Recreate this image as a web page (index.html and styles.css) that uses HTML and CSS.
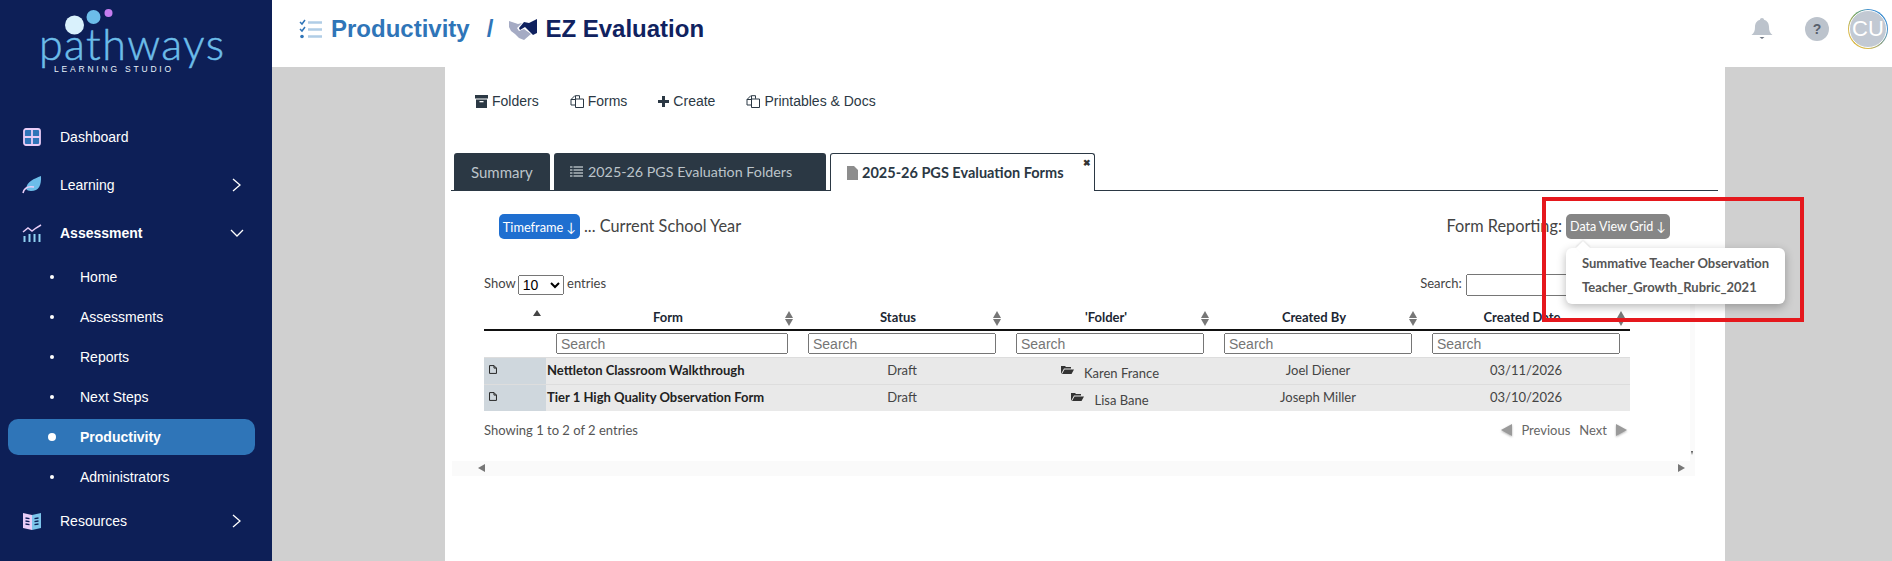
FILE: index.html
```html
<!DOCTYPE html>
<html lang="en">
<head>
<meta charset="utf-8">
<title>EZ Evaluation</title>
<link rel="stylesheet" href="styles.css">
</head>
<body>
<div class="app">
  <aside class="sidebar">
    <div class="logo">
      <svg class="logo-dots" width="60" height="32" viewBox="0 0 60 32"><circle cx="11.5" cy="19" r="9.5" fill="#d9f1fc"/><circle cx="30.5" cy="11" r="7" fill="#6cbde9"/><circle cx="45.5" cy="7" r="4" fill="#c67df0"/></svg>
      <div class="logo-word">pathways</div>
      <div class="logo-sub">LEARNING STUDIO</div>
    </div>
    <nav class="nav">
      <a class="nav-main">
        <svg class="nav-icon" viewBox="0 0 20 20"><rect x="2" y="2" width="16" height="16" rx="2" fill="#2f75b8" stroke="#e9cdf7" stroke-width="1.8"/><path d="M10 2v16M2 10h16" stroke="#e9cdf7" stroke-width="1.8"/></svg>
        <span>Dashboard</span>
      </a>
      <a class="nav-main">
        <svg class="nav-icon" viewBox="0 0 20 20"><path d="M19 1c.5 9-2 15-10 15-2.500 0-4-1-5-2C5 6 12 4 19 1z" fill="#6cbde9"/><path d="M1 18c1-5 5-7 11-6" fill="none" stroke="#e9cdf7" stroke-width="1.500"/></svg>
        <span>Learning</span>
        <svg class="chev" viewBox="0 0 12 14"><path d="M2 1l7 6-7 6" fill="none" stroke="#fff" stroke-width="1.300"/></svg>
      </a>
      <a class="nav-main nav-open">
        <svg class="nav-icon" viewBox="0 0 20 20"><path d="M1 9l5-4 4 3 4-3 5-3" fill="none" stroke="#e9cdf7" stroke-width="1.500"/><path d="M2.500 13v6M7.500 11v8M12.500 11v8M17.500 11v8" stroke="#8fd0f0" stroke-width="2"/></svg>
        <span>Assessment</span>
        <svg class="chev chev-down" viewBox="0 0 14 12"><path d="M1 3l6 6 6-6" fill="none" stroke="#fff" stroke-width="1.300"/></svg>
      </a>
      <a class="nav-sub">Home</a>
      <a class="nav-sub">Assessments</a>
      <a class="nav-sub">Reports</a>
      <a class="nav-sub">Next Steps</a>
      <a class="nav-sub nav-active">Productivity</a>
      <a class="nav-sub">Administrators</a>
      <a class="nav-main">
        <svg class="nav-icon" viewBox="0 0 20 20"><path d="M10 4L1 2v15l9 2z" fill="#e9cdf7"/><path d="M10 4l9-2v15l-9 2z" fill="#7cc4ea"/><path d="M3.500 7l4 .6M3.500 10l4 .6M3.500 13l4 .6M12.500 7.600l4-.6M12.500 10.600l4-.6M12.500 13.600l4-.6" stroke="#0d1f57" stroke-width="1.300"/></svg>
        <span>Resources</span>
        <svg class="chev" viewBox="0 0 12 14"><path d="M2 1l7 6-7 6" fill="none" stroke="#fff" stroke-width="1.300"/></svg>
      </a>
    </nav>
  </aside>
  <div class="main">
    <header class="topbar">
      <svg class="crumb-icon" width="24" height="20" viewBox="0 0 24 20"><path d="M1 3l2 2 3-4M1 10l2 2 3-4" fill="none" stroke="#2f75b8" stroke-width="1.500"/><circle cx="3" cy="17.500" r="1.800" fill="#2f75b8"/><path d="M9 3.500h14M9 10.500h14M9 17.500h14" stroke="#b0cde6" stroke-width="2.600"/></svg>
      <span class="crumb-link">Productivity</span>
      <span class="crumb-sep">/</span>
      <svg class="crumb-hands" width="28" height="21" viewBox="0 0 28 21"><path d="M0 2L9 5l4-1-5 5 2 3 5-2 7 5-7 6-5-2-4-4-4-3-2-4z" fill="#a5abc4"/><path d="M10 9l5-6 5 1 8-4v14l-4 2-8-8-5 3z" fill="#10225f"/></svg>
      <h1 class="crumb-title">EZ Evaluation</h1>
      <div class="top-actions">
        <svg class="bell" width="22" height="24" viewBox="0 0 22 24"><path d="M11 1c1.200 0 2 .8 2 1.800C16.500 3.700 18 7 18 10c0 4 1 6 3.500 8H.5C3 16 4 14 4 10c0-3 1.500-6.300 5-7.200C9 1.800 9.800 1 11 1z" fill="#bcc3cc"/><path d="M8.500 20h5l-2.500 2z" fill="#6e7682"/></svg>
        <span class="help">?</span>
        <span class="avatar"><span class="avatar-in">CU</span></span>
      </div>
    </header>
    <main class="stage">
      <section class="panel">
        <div class="toolbar">
          <a class="tool"><svg width="13" height="13" viewBox="0 0 13 13"><path d="M0 0h13v3.500H0zM1 4.500h11V13H1z" fill="#2b3844"/><rect x="4.500" y="6" width="4" height="1.300" fill="#fff"/></svg>Folders</a>
          <a class="tool"><svg width="14" height="13" viewBox="0 0 14 13"><path d="M5.500 4V.7h4v3M1 4.500l4-4M5.500 4.500H1V10h4M5.500 4h8v8.500h-8z" fill="none" stroke="#2b3844"/></svg>Forms</a>
          <a class="tool"><svg width="11" height="11" viewBox="0 0 11 11"><path d="M4 0h3v4h4v3H7v4H4V7H0V4h4z" fill="#2b3844"/></svg>Create</a>
          <a class="tool"><svg width="14" height="13" viewBox="0 0 14 13"><path d="M5.500 4V.7h4v3M1 4.500l4-4M5.500 4.500H1V10h4M5.500 4h8v8.500h-8z" fill="none" stroke="#2b3844"/></svg>Printables &amp; Docs</a>
        </div>
        <div class="tabs">
          <a class="tab tab-summary">Summary</a>
          <a class="tab tab-folders"><svg width="13" height="12" viewBox="0 0 13 12"><path d="M0 1h2.500M3.500 1H13M0 4h2.500M3.500 4H13M0 7h2.500M3.500 7H13M0 10h2.500M3.500 10H13" stroke="#aeb6bc" stroke-width="1.500"/></svg>2025-26 PGS Evaluation Folders</a>
          <a class="tab tab-active"><svg width="11" height="14" viewBox="0 0 11 14"><path d="M0 0h7l4 4v10H0z" fill="#8d8d8d"/></svg>2025-26 PGS Evaluation Forms<span class="tab-x">✖</span></a>
        </div>
        <div class="filters">
          <div class="filter-left"><button class="btn btn-blue">Timeframe ↓</button><span class="filter-text">... Current School Year</span></div>
          <div class="filter-right"><span class="filter-text">Form Reporting:</span><button class="btn btn-gray">Data View Grid ↓</button></div>
        </div>
        <div class="scroller">
          <div class="dt-top">
            <label class="dt-len">Show <select><option>10</option></select> entries</label>
            <label class="dt-search">Search: <input type="text"></label>
          </div>
          <table class="grid">
            <colgroup><col class="c0"><col class="c1"><col class="c2"><col class="c2"><col class="c2"><col class="c2"></colgroup>
            <thead>
              <tr class="head">
                <th class="sort-first"></th>
                <th class="sortable">Form</th><th class="sortable">Status</th><th class="sortable">'Folder'</th><th class="sortable">Created By</th><th class="sortable">Created Date</th>
              </tr>
              <tr class="search-row">
                <th></th>
                <th><input type="text" placeholder="Search"></th><th><input type="text" placeholder="Search"></th><th><input type="text" placeholder="Search"></th><th><input type="text" placeholder="Search"></th><th><input type="text" placeholder="Search"></th>
              </tr>
            </thead>
            <tbody>
              <tr>
                <td class="ic"><svg width="8" height="9" viewBox="0 0 9 10"><path d="M.6.6h5l2.800 2.800v6H.6zM5.600.6v2.800h2.800" fill="none" stroke="#222" stroke-width="1.100"/></svg></td>
                <td class="name">Nettleton Classroom Walkthrough</td><td>Draft</td>
                <td><span class="folder"><svg width="13" height="9" viewBox="0 0 13 9"><path d="M0 9V1h4l1 1h5v1.500H3L0 9zM3.500 4.500H13L10.500 9H1z" fill="#333"/></svg><span class="folder-name">Karen France</span></span></td>
                <td>Joel Diener</td><td>03/11/2026</td>
              </tr>
              <tr>
                <td class="ic"><svg width="8" height="9" viewBox="0 0 9 10"><path d="M.6.6h5l2.800 2.800v6H.6zM5.600.6v2.800h2.800" fill="none" stroke="#222" stroke-width="1.100"/></svg></td>
                <td class="name">Tier 1 High Quality Observation Form</td><td>Draft</td>
                <td><span class="folder"><svg width="13" height="9" viewBox="0 0 13 9"><path d="M0 9V1h4l1 1h5v1.500H3L0 9zM3.500 4.500H13L10.500 9H1z" fill="#333"/></svg><span class="folder-name">Lisa Bane</span></span></td>
                <td>Joseph Miller</td><td>03/10/2026</td>
              </tr>
            </tbody>
          </table>
          <div class="dt-foot">
            <span>Showing 1 to 2 of 2 entries</span>
            <span class="pager"><i class="tri tri-l"></i><a>Previous</a><a>Next</a><i class="tri tri-r"></i></span>
          </div>
          <div class="hbar"><i class="mini mini-l"></i><i class="mini mini-r"></i></div>
          <i class="vmark"></i>
        </div>
      </section>
    </main>
  </div>
</div>
<div class="popover">
  <a>Summative Teacher Observation</a>
  <a>Teacher_Growth_Rubric_2021</a>
</div>
<div class="redbox"></div>
</body>
</html>
```
FILE: styles.css
```css
* { box-sizing: border-box; }
html, body { margin: 0; height: 561px; overflow: hidden; }
body { font-family: "Liberation Sans", Arial, sans-serif; background: #fff; }
.app { display: flex; height: 561px; }

.sidebar { width: 272px; flex: none; background: #0d1f57; color: #fff; }
.logo { height: 113px; padding: 6px 0 0 39px; }
.logo-dots { display: block; margin-left: 24px; height: 32px; }
.logo-word { font-family: "Lato", sans-serif; font-weight: 300; font-size: 43px; line-height: 34px; height: 34px; color: #6cbde9; margin-top: -11px; letter-spacing: 1.400px; -webkit-text-stroke: .5px #6cbde9; }
.logo-sub { font-size: 8.500px; line-height: 10px; letter-spacing: 2.800px; margin: 3px 0 0 15px; color: #e8f2fa; white-space: nowrap; }
.nav { display: flex; flex-direction: column; }
.nav-main { height: 48px; display: flex; align-items: center; padding-left: 22px; font-size: 14px; }
.nav-main span { margin-left: 18px; }
.nav-open { font-weight: 700; }
.nav-icon { width: 20px; height: 20px; flex: none; }
.chev { width: 12px; height: 14px; margin-left: auto; margin-right: 29px; }
.chev-down { width: 14px; height: 12px; margin-right: 28px; }
.nav-sub { height: 36px; margin: 2px 17px 2px 8px; padding-left: 72px; display: flex; align-items: center; font-size: 14px; position: relative; border-radius: 10px; }
.nav-sub::before { content: ""; position: absolute; left: 42px; top: 16px; width: 4px; height: 4px; border-radius: 50%; background: #fff; }
.nav-active { background: #2f75b8; font-weight: 700; }
.nav-active::before { left: 40px; top: 14px; width: 8px; height: 8px; }

.main { flex: 1; display: flex; flex-direction: column; min-width: 0; }
.topbar { height: 67px; flex: none; background: #fff; display: flex; align-items: center; padding: 0 4px 9px 27px; }
.crumb-icon { flex: none; }
.crumb-link { font-size: 24px; font-weight: 700; color: #2f75b8; margin-left: 8px; }
.crumb-sep { font-size: 24px; font-weight: 700; color: #2f75b8; margin: 0 16px 0 17px; }
.crumb-hands { flex: none; }
.crumb-title { font-size: 24px; font-weight: 700; color: #10225f; margin: 0 0 0 8px; }
.top-actions { margin-left: auto; display: flex; align-items: center; }
.bell { flex: none; }
.help { width: 24px; height: 24px; margin-left: 32px; border-radius: 50%; background: #bcc3cc; color: #58606c; font-size: 14px; font-weight: 700; text-align: center; line-height: 24px; }
.avatar { width: 40px; height: 40px; margin-left: 19px; border-radius: 50%; padding: 1px; background: conic-gradient(#3e8ed0 0 25%, #d9b94a 50% 75%, #6fa56e 90%, #3e8ed0); }
.avatar-in { display: block; width: 38px; height: 38px; border-radius: 50%; border: 1px solid #fff; background: #c2c9d3; color: #fff; font-size: 22px; line-height: 36px; text-align: center; }

.stage { flex: 1; background: #d0d0d0; padding-left: 173px; min-height: 0; }
.panel { width: 1280px; height: 100%; background: #fff; padding-top: 24px; font-family: "Lato", sans-serif; color: #444; }
.toolbar { display: flex; gap: 31px; height: 20px; padding-left: 30px; font-family: "Liberation Sans", Arial, sans-serif; font-size: 14px; color: #2b3844; }
.tool { display: flex; align-items: center; gap: 4px; }

.tabs { display: flex; gap: 4px; margin: 42px 7px 0 6px; height: 38px; padding-left: 3px; border-bottom: 1px solid #2b3844; align-items: flex-end; }
.tab { height: 37px; background: #2b3844; color: #bcc4ca; font-size: 15px; display: flex; align-items: center; border-radius: 3px 3px 0 0; white-space: nowrap; }
.tab-summary { width: 96px; padding-left: 17px; }
.tab-folders { width: 272px; padding-left: 16px; gap: 5px; font-size: 14.300px; }
.tab-active { width: 265px; height: 38px; margin-bottom: -1px; padding-left: 16px; gap: 4px; background: #fff; color: #2b3844; font-weight: 700; font-size: 14.500px; border: 1px solid #2b3844; border-bottom: 0; position: relative; }
.tab-x { position: absolute; right: 3px; top: 3px; font-size: 9px; color: #333; }

.filters { display: flex; justify-content: space-between; margin: 23px 55px 0 54px; height: 25px; align-items: center; }
.filter-left, .filter-right { display: flex; align-items: center; gap: 4px; }
.filter-text { font-size: 16.300px; color: #444; padding-bottom: 2px; }
.btn { height: 25px; border: 0; border-radius: 5px; color: #fff; font-family: "Lato", sans-serif; font-size: 12.800px; padding: 0; white-space: nowrap; }
.btn-blue { width: 81px; background: #1f6fd0; }
.btn-gray { width: 104px; background: #868686; font-size: 12.500px; }

.scroller { margin: 35px 30px 0 7px; padding-left: 32px; height: 202px; border-right: 5px solid #fafafa; position: relative; }
.dt-top { width: 1146px; height: 22px; display: flex; justify-content: space-between; align-items: center; font-size: 13px; color: #444; }
.dt-len select { width: 46px; height: 20px; font: 14px "Liberation Sans", Arial, sans-serif; margin: 0 0 0 -1px; padding: 0; vertical-align: middle; }
.dt-search input { width: 164px; height: 22px; margin-left: 1px; vertical-align: middle; }
.grid { width: 1146px; table-layout: fixed; border-collapse: collapse; margin-top: 9px; font-size: 13px; color: #444; }
.c0 { width: 62px; } .c1 { width: 252px; } .c2 { width: 208px; }
.head th { height: 25px; border-bottom: 2px solid #111; padding: 0 18px 0 10px; font-size: 13px; font-weight: 700; color: #1c2733; position: relative; text-align: center; }
.sortable::after { content: ""; position: absolute; right: 5px; top: 6px; width: 0; height: 0; border-left: 4.500px solid transparent; border-right: 4.500px solid transparent; border-bottom: 7px solid #777; }
.sortable::before { content: ""; position: absolute; right: 5px; top: 14px; width: 0; height: 0; border-left: 4.500px solid transparent; border-right: 4.500px solid transparent; border-top: 7px solid #777; }
.sort-first::after { content: ""; position: absolute; left: 49px; top: 5px; width: 0; height: 0; border-left: 4px solid transparent; border-right: 4px solid transparent; border-bottom: 6px solid #444; }
.search-row th { height: 27px; padding: 0 10px; }
.search-row input { display: block; width: 100%; height: 21px; font: 14px "Liberation Sans", Arial, sans-serif; padding: 1px 3px; }
.grid tbody td { height: 27px; padding: 0 0 2px; background: #e9e9e9; text-align: center; border-top: 1px solid #ddd; }
.grid tbody td.ic { background: #cfd7dd; text-align: left; padding: 0 0 2px 5px; }
.grid tbody td.name { text-align: left; padding: 0 0 2px 1px; font-weight: 700; color: #222; }
.ic svg { display: block; }
.folder { display: inline-flex; align-items: center; gap: 10px; }
.folder-name { padding-top: 6px; }
.dt-foot { width: 1146px; display: flex; justify-content: space-between; align-items: center; height: 20px; margin-top: 9px; font-size: 13px; color: #555; }
.pager { display: flex; align-items: center; padding-right: 3px; color: #666; }
.pager a { margin-left: 9px; }
.tri { width: 0; height: 0; border-top: 6px solid transparent; border-bottom: 6px solid transparent; filter: drop-shadow(0 1px 1px rgba(0,0,0,.3)); }
.tri-l { border-right: 11px solid #9a9a9a; }
.tri-r { border-left: 11px solid #9a9a9a; margin-left: 9px; }
.hbar { position: absolute; left: 0; right: 0; top: 187px; height: 15px; background: #fafafa; }
.mini { position: absolute; top: 3px; width: 0; height: 0; border-top: 4px solid transparent; border-bottom: 4px solid transparent; }
.mini-l { left: 26px; border-right: 7px solid #777; }
.mini-r { right: 5px; border-left: 7px solid #777; }
.vmark { position: absolute; right: -3px; top: 177px; width: 0; height: 0; border-left: 1.500px solid transparent; border-right: 1.500px solid transparent; border-top: 4px solid #555; }

.popover { position: absolute; left: 1566px; top: 248px; width: 219px; height: 56px; background: #fff; border-radius: 6px; box-shadow: 0 3px 10px rgba(0,0,0,.28); padding: 3px 0 0 16px; font-family: "Lato", sans-serif; font-size: 13px; font-weight: 700; color: #555; display: flex; flex-direction: column; }
.popover a { height: 24px; line-height: 24px; }
.popover::before { content: ""; position: absolute; left: 12px; top: -5px; width: 10px; height: 10px; background: #fff; transform: rotate(45deg); box-shadow: -1px -1px 2px rgba(0,0,0,.1); }
.redbox { position: absolute; left: 1542px; top: 197px; width: 262px; height: 125px; border: 4px solid #e5181d; pointer-events: none; }
```
